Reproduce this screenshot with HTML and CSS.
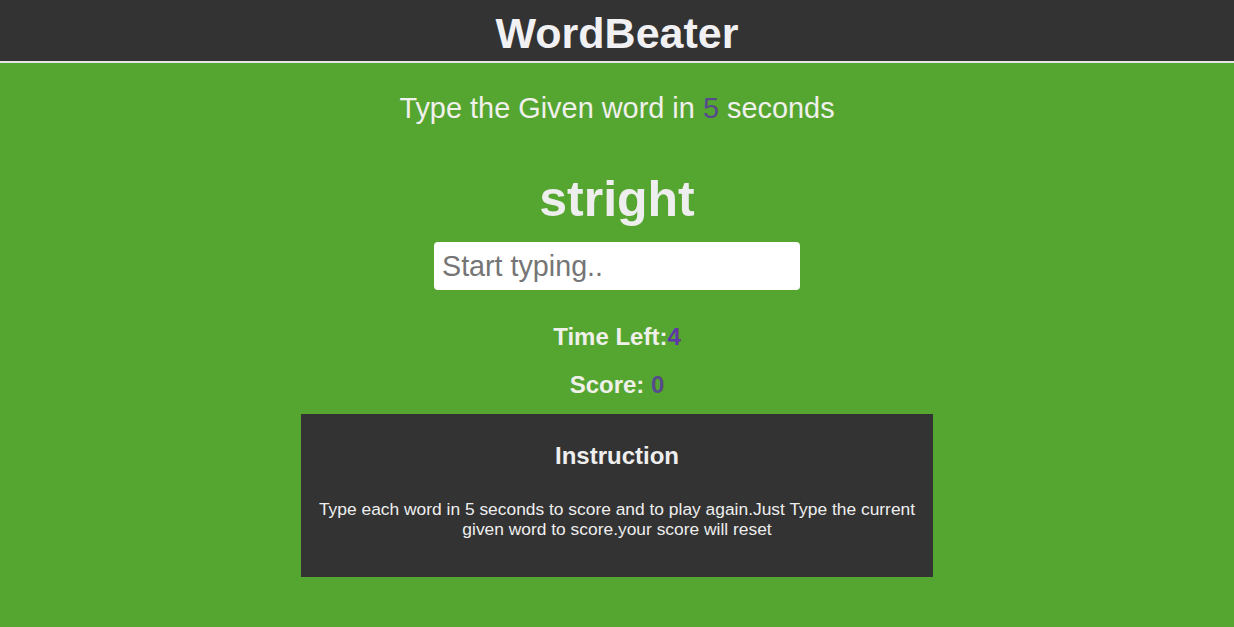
FILE: index.html
```html
<!DOCTYPE html>
<html lang="en">
<head>
<meta charset="utf-8">
<title>WordBeater</title>
<link rel="stylesheet" href="styles.css">
</head>
<body>
<header class="topbar">
  <h1 class="brand">WordBeater</h1>
</header>
<main class="game">
  <p class="lead">Type the Given word in <span class="secs">5</span> seconds</p>
  <h2 class="word">stright</h2>
  <input class="typing" type="text" placeholder="Start typing..">
  <div class="stats">
    <h3 class="stat">Time Left:<span class="time">4</span></h3>
    <h3 class="stat">Score: <span class="score">0</span></h3>
  </div>
  <section class="instructions">
    <h3 class="ins-title">Instruction</h3>
    <p class="ins-text">Type each word in 5 seconds to score and to play again.Just Type the current given word to score.your score will reset</p>
  </section>
</main>
</body>
</html>
```

FILE: styles.css
```css
html, body {
  margin: 0;
  padding: 0;
}
body {
  background: #55a630;
  font-family: "Liberation Sans", Arial, sans-serif;
  color: #eeeeee;
  min-height: 627px;
}
.topbar {
  background: #333333;
  height: 61px;
  border-bottom: 2px solid #e4e6e3;
  display: flex;
  align-items: center;
  justify-content: center;
}
.brand {
  margin: 0;
  font-size: 43px;
  line-height: 50px;
  font-weight: 700;
  color: #f1f1f3;
  padding-top: 4px;
}
.game {
  display: flex;
  flex-direction: column;
  align-items: center;
  text-align: center;
}
.lead {
  margin: 29px 0 0;
  font-size: 28.9px;
  line-height: 33px;
  color: #f0f0ec;
}
.secs {
  color: #574a8c;
}
.word {
  margin: 46px 0 0;
  font-size: 50px;
  line-height: 57px;
  font-weight: 700;
  color: #eeeeee;
}
.typing {
  margin-top: 14px;
  box-sizing: border-box;
  width: 366px;
  height: 48px;
  border: none;
  border-radius: 4px;
  background: #ffffff;
  padding: 0 8px;
  font-family: "Liberation Sans", Arial, sans-serif;
  font-size: 28.7px;
  color: #333333;
  outline: none;
}
.typing::placeholder {
  color: #757575;
}
.stats {
  display: flex;
  flex-direction: column;
  align-items: center;
  gap: 20px;
  margin-top: 33px;
}
.stat {
  margin: 0;
  font-size: 24px;
  line-height: 28px;
  font-weight: 700;
  color: #f0f0ea;
}
.time {
  color: #6038a6;
}
.score {
  color: #554a8c;
}
.instructions {
  margin-top: 15px;
  box-sizing: border-box;
  width: 632px;
  height: 163px;
  background: #333333;
  padding: 28px 16px 0;
}
.ins-title {
  margin: 0;
  font-size: 24px;
  line-height: 28px;
  font-weight: 700;
  color: #eeeeee;
}
.ins-text {
  margin: 29px 0 0;
  font-size: 17.4px;
  line-height: 20px;
  color: #eeeeee;
}
```
